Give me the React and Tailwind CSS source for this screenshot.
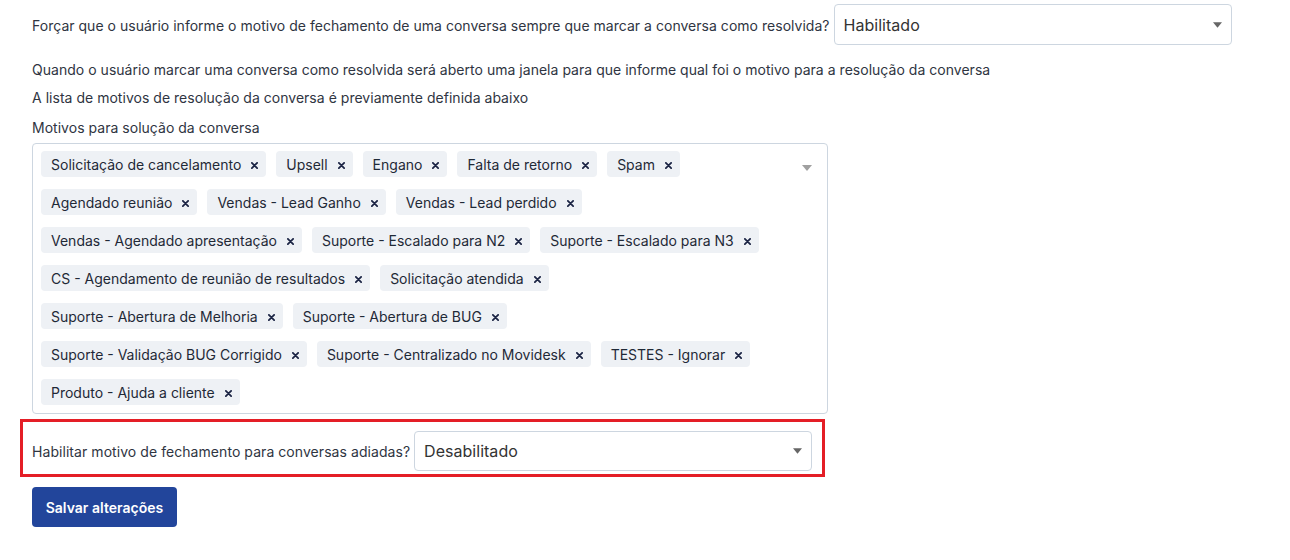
import React from 'react';

const motivos = [
  'Solicitação de cancelamento',
  'Upsell',
  'Engano',
  'Falta de retorno',
  'Spam',
  'Agendado reunião',
  'Vendas - Lead Ganho',
  'Vendas - Lead perdido',
  'Vendas - Agendado apresentação',
  'Suporte - Escalado para N2',
  'Suporte - Escalado para N3',
  'CS - Agendamento de reunião de resultados',
  'Solicitação atendida',
  'Suporte - Abertura de Melhoria',
  'Suporte - Abertura de BUG',
  'Suporte - Validação BUG Corrigido',
  'Suporte - Centralizado no Movidesk',
  'TESTES - Ignorar',
  'Produto - Ajuda a cliente',
];

const Caret = ({ className }) => (
  <svg viewBox="0 0 10 6" className={className}>
    <path d="M0 0 L10 0 L5 6 Z" fill="currentColor" />
  </svg>
);

const Tag = ({ label }) => (
  <span className="flex items-center h-[26px] pl-[10px] pr-[8px] rounded-[4px] bg-[#eef1f5] text-[#1f2937] tracking-normal">
    {label}
    <svg viewBox="0 0 8 8" className="w-[7px] h-[7px] ml-[10px] mt-[2px] text-[#1b2444]">
      <path d="M1 1 L7 7 M7 1 L1 7" stroke="currentColor" strokeWidth="2" strokeLinecap="round" />
    </svg>
  </span>
);

const Select = ({ value, className }) => (
  <div className={`relative flex items-center bg-white border border-[#cdd6e0] rounded-[4px] pl-[9px] text-[16px] text-[#333] ${className}`}>
    {value}
    <Caret className="absolute right-[9px] top-1/2 -translate-y-1/2 w-[9px] h-[6px] text-[#666]" />
  </div>
);

export default function App() {
  return (
    <div className="w-[1290px] h-[560px] bg-white text-[14px] text-[#2f3542] tracking-[0.025px] overflow-hidden" style={{ fontFamily: 'Inter, "Noto Sans", sans-serif' }}>
      <div className="pl-[32px]">
        <div className="flex items-center pt-[4px]">
          <span className="mt-[1px]">Forçar que o usuário informe o motivo de fechamento de uma conversa sempre que marcar a conversa como resolvida?</span>
          <Select value="Habilitado" className="ml-[4px] w-[398px] h-[41px]" />
        </div>

        <p className="mt-[15px] leading-[20px]">Quando o usuário marcar uma conversa como resolvida será aberto uma janela para que informe qual foi o motivo para a resolução da conversa</p>
        <p className="mt-[8px] leading-[20px]">A lista de motivos de resolução da conversa é previamente definida abaixo</p>
        <p className="mt-[10px] leading-[20px]">Motivos para solução da conversa</p>

        <div className="relative mt-[5px] w-[796px] border border-[#cdd6e0] rounded-[4px] pl-[8px] pr-[50px] pt-[7px] pb-[8px]">
          <div className="flex flex-wrap gap-x-[10px] gap-y-[12px]">
            {motivos.map((m) => (
              <Tag key={m} label={m} />
            ))}
          </div>
          <Caret className="absolute right-[15px] top-[21px] w-[10px] h-[6px] text-[#a0a0a0]" />
        </div>
      </div>

      <div className="ml-[20px] mt-[5px] w-[805px] h-[58px] border-[3px] border-[#e41e26] flex items-center pl-[9px] pt-[6px]">
        <span className="mt-[1px] tracking-[0.06px]">Habilitar motivo de fechamento para conversas adiadas?</span>
        <Select value="Desabilitado" className="ml-[4px] w-[398px] h-[40px]" />
      </div>

      <div className="pl-[32px] mt-[10px]">
        <button className="h-[40px] w-[145px] rounded-[4px] bg-[#22459b] text-white font-semibold text-[14px]">
          Salvar alterações
        </button>
      </div>
    </div>
  );
}
